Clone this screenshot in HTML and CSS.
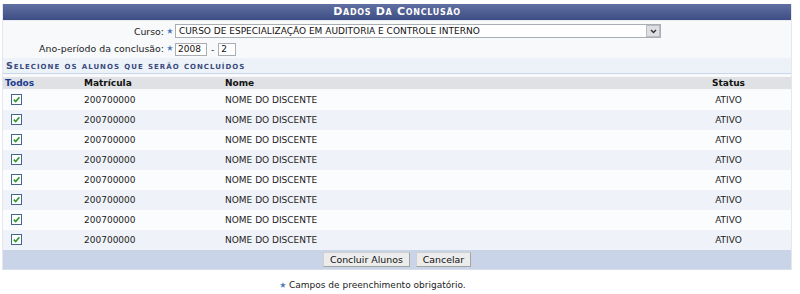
FILE: index.html
```html
<!DOCTYPE html>
<html lang="pt">
<head>
<meta charset="utf-8">
<link rel="stylesheet" href="styles.css">
</head>
<body>
<div class="box">
  <div class="head">Dados Da Conclusão</div>
  <div class="fields">
    <div class="frow">
      <span class="lbl">Curso:</span>
      <span class="req"><svg viewBox="0 0 10 10"><polygon points="5,0 6.2,3.6 10,3.7 7,6 8.1,9.7 5,7.5 1.9,9.7 3,6 0,3.7 3.8,3.6" fill="#4a73b8"/></svg></span>
      <div class="select"><span class="seltext">CURSO DE ESPECIALIZAÇÃO EM AUDITORIA E CONTROLE INTERNO</span><span class="selbtn"><svg viewBox="0 0 8 6"><path d="M1 1.2 L4 4.2 L7 1.2" fill="none" stroke="#333" stroke-width="1.8"/></svg></span></div>
    </div>
    <div class="frow frow2">
      <span class="lbl">Ano-período da conclusão:</span>
      <span class="req"><svg viewBox="0 0 10 10"><polygon points="5,0 6.2,3.6 10,3.7 7,6 8.1,9.7 5,7.5 1.9,9.7 3,6 0,3.7 3.8,3.6" fill="#4a73b8"/></svg></span>
      <span class="inp ano">2008</span><span class="dash">-</span><span class="inp per">2</span>
    </div>
  </div>
  <div class="sub">Selecione os alunos que serão concluídos</div>
  <table class="list">
    <thead>
      <tr><th class="c1"><a class="todos">Todos</a></th><th class="c2">Matrícula</th><th class="c3">Nome</th><th class="c4">Status</th></tr>
    </thead>
    <tbody>
      <tr><td class="c1"><span class="cb"><svg viewBox="0 0 9 9"><path d="M1.8 4.6 L3.7 6.6 L7.4 2.2" fill="none" stroke="#2a9a2a" stroke-width="1.6"/></svg></span></td><td>200700000</td><td>NOME DO DISCENTE</td><td class="c4">ATIVO</td></tr>
      <tr><td class="c1"><span class="cb"><svg viewBox="0 0 9 9"><path d="M1.8 4.6 L3.7 6.6 L7.4 2.2" fill="none" stroke="#2a9a2a" stroke-width="1.6"/></svg></span></td><td>200700000</td><td>NOME DO DISCENTE</td><td class="c4">ATIVO</td></tr>
      <tr><td class="c1"><span class="cb"><svg viewBox="0 0 9 9"><path d="M1.8 4.6 L3.7 6.6 L7.4 2.2" fill="none" stroke="#2a9a2a" stroke-width="1.6"/></svg></span></td><td>200700000</td><td>NOME DO DISCENTE</td><td class="c4">ATIVO</td></tr>
      <tr><td class="c1"><span class="cb"><svg viewBox="0 0 9 9"><path d="M1.8 4.6 L3.7 6.6 L7.4 2.2" fill="none" stroke="#2a9a2a" stroke-width="1.6"/></svg></span></td><td>200700000</td><td>NOME DO DISCENTE</td><td class="c4">ATIVO</td></tr>
      <tr><td class="c1"><span class="cb"><svg viewBox="0 0 9 9"><path d="M1.8 4.6 L3.7 6.6 L7.4 2.2" fill="none" stroke="#2a9a2a" stroke-width="1.6"/></svg></span></td><td>200700000</td><td>NOME DO DISCENTE</td><td class="c4">ATIVO</td></tr>
      <tr><td class="c1"><span class="cb"><svg viewBox="0 0 9 9"><path d="M1.8 4.6 L3.7 6.6 L7.4 2.2" fill="none" stroke="#2a9a2a" stroke-width="1.6"/></svg></span></td><td>200700000</td><td>NOME DO DISCENTE</td><td class="c4">ATIVO</td></tr>
      <tr><td class="c1"><span class="cb"><svg viewBox="0 0 9 9"><path d="M1.8 4.6 L3.7 6.6 L7.4 2.2" fill="none" stroke="#2a9a2a" stroke-width="1.6"/></svg></span></td><td>200700000</td><td>NOME DO DISCENTE</td><td class="c4">ATIVO</td></tr>
      <tr><td class="c1"><span class="cb"><svg viewBox="0 0 9 9"><path d="M1.8 4.6 L3.7 6.6 L7.4 2.2" fill="none" stroke="#2a9a2a" stroke-width="1.6"/></svg></span></td><td>200700000</td><td>NOME DO DISCENTE</td><td class="c4">ATIVO</td></tr>
    </tbody>
  </table>
  <div class="foot">
    <span class="btn">Concluir Alunos</span><span class="btn">Cancelar</span>
  </div>
</div>
<div class="note"><span class="req"><svg viewBox="0 0 10 10"><polygon points="5,0 6.2,3.6 10,3.7 7,6 8.1,9.7 5,7.5 1.9,9.7 3,6 0,3.7 3.8,3.6" fill="#4a73b8"/></svg></span>Campos de preenchimento obrigatório.</div>
</body>
</html>
```

FILE: styles.css
```css
* { box-sizing: border-box; }
body {
  margin: 0;
  background: #fff;
  font-family: "DejaVu Sans", Verdana, sans-serif;
  font-size: 9px;
  color: #222;
}
.box {
  margin: 4px 0 0 2px;
  width: 790px;
  background: #f8f9fb;
  border-left: 1px solid #e4e7ee;
  border-right: 1px solid #e4e7ee;
}
.head {
  height: 17px;
  line-height: 16px;
  background: linear-gradient(#6070a2, #3e4d83 94%, #e8ebf2 94%);
  color: #fff;
  font-weight: bold;
  font-size: 11px;
  font-variant: small-caps;
  letter-spacing: 0.7px;
  text-align: center;
}
.fields {
  padding: 2px 0 2px;
}
.frow {
  display: flex;
  align-items: center;
  height: 16px;
  margin-bottom: 1px;
}
.frow2 { margin-bottom: 0; }
.lbl {
  width: 161px;
  text-align: right;
  font-size: 9.4px;
  color: #222;
}
.req {
  display: inline-flex;
  width: 9px;
  justify-content: center;
  margin-left: 1px;
}
.req svg { width: 6px; height: 6px; }
.select {
  display: flex;
  align-items: center;
  width: 486px;
  height: 14px;
  background: #fff;
  border: 1px solid #a9aeb4;
  margin-left: 1px;
}
.seltext {
  flex: 1;
  padding-left: 3px;
  font-size: 9px;
  color: #111;
}
.selbtn {
  display: flex;
  align-items: center;
  justify-content: center;
  width: 14px;
  height: 12px;
  background: #dedfe3;
  border: 1px solid #b9bcc2;
}
.selbtn svg { width: 7px; height: 5px; }
.inp {
  display: inline-block;
  height: 13px;
  line-height: 11px;
  background: #fff;
  border: 1px solid #a9aeb4;
  padding-left: 2px;
  font-size: 9px;
  color: #111;
  margin-top: 3px;
}
.ano { width: 32px; margin-left: 1px; }
.per { width: 18px; }
.dash { padding: 3px 4px 0; }
.sub {
  height: 16px;
  line-height: 15px;
  padding-left: 3px;
  background: #edf1f8;
  border-bottom: 1px solid #c9d6ec;
  color: #3a4b7d;
  font-weight: bold;
  font-size: 9.5px;
  font-variant: small-caps;
  letter-spacing: 1px;
}
.list {
  width: 100%;
  border-collapse: collapse;
  margin-top: 3px;
  table-layout: fixed;
}
.list th {
  height: 12px;
  line-height: 12px;
  background: #e0e1e4;
  text-align: left;
  font-weight: bold;
  font-size: 9px;
  color: #111;
  padding: 0 0 0 2px;
}
.list thead tr { border-bottom: 1px solid #f8f9fb; }
.list th.c1 { width: 79px; }
.list th.c2 { width: 141px; }
.list th.c3 { width: 443px; }
.list .c4 { text-align: center; padding-left: 0; }
.todos { color: #1b3b90; }
.list td {
  height: 20px;
  padding: 0 0 0 2px;
  font-size: 9px;
  color: #222;
}
.list tbody tr:nth-child(odd) td { background: #fbfcfe; }
.list tbody tr:nth-child(even) td { background: #eff2f8; }
.list td.c1 { padding-left: 8px; }
.cb {
  display: block;
  width: 11px;
  height: 11px;
  border: 1px solid #45668f;
  background: #fff;
}
.cb svg { display: block; width: 9px; height: 9px; }
.foot {
  display: flex;
  justify-content: center;
  gap: 6px;
  height: 20px;
  padding-top: 2px;
  background: #c9d4e9;
  border-bottom: 1px solid #d7dde9;
}
.btn {
  display: inline-block;
  height: 15px;
  line-height: 13px;
  padding: 0 6px;
  background: #ececec;
  border: 1px solid #a3a3a3;
  border-top-color: #d0d0d0;
  border-left-color: #d0d0d0;
  font-size: 9.4px;
  color: #111;
}
.note {
  padding: 10px 0 0 278px;
  font-size: 9px;
  color: #222;
  display: flex;
  align-items: center;
}
.note .req { width: 10px; margin-left: 0; margin-right: 1px; }
```
